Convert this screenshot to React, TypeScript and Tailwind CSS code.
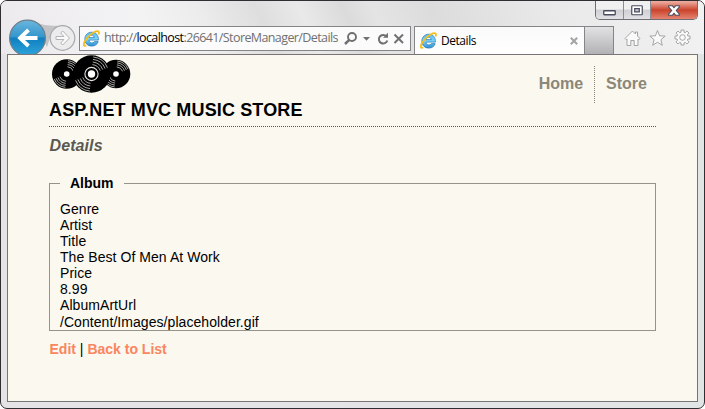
import React from "react";

function IELogo() {
  return (
    <svg width="17" height="17" viewBox="0 0 17 17" className="shrink-0">
      <defs>
        <linearGradient id="ieBlue" x1="0" y1="0" x2="0" y2="1">
          <stop offset="0" stopColor="#5fbdea" />
          <stop offset=".5" stopColor="#7fd3f5" />
          <stop offset="1" stopColor="#2b8ccd" />
        </linearGradient>
      </defs>
      <path
        fillRule="evenodd"
        d="M8.800 2.200C4.800 2.200 1.800 5.100 1.800 9.200c0 4 2.900 6.900 7 6.900 3.100 0 5.500-1.600 6.400-4.500h-3.900c-.5.9-1.300 1.400-2.400 1.400-1.700 0-2.800-1.100-2.900-2.900h9.400c.3-4.600-2.300-7.900-6.600-7.900zM6.100 7.600C6.300 6.100 7.300 5.200 8.700 5.200s2.400.9 2.600 2.400z"
        fill="url(#ieBlue)"
        stroke="#2079b8"
        strokeWidth=".7"
      />
      <path
        d="M3.300 15.500C-.3 17 .1 12.700 3.900 8.300 8 3.400 14 .1 15.600 1.600c.6.600.4 1.800-.1 2.900"
        fill="none"
        stroke="#f6be1c"
        strokeWidth="1.800"
      />
    </svg>
  );
}

function NavButtons() {
  return (
    <svg width="68" height="35" viewBox="0 0 68 35" className="shrink-0">
      <defs>
        <linearGradient id="back" x1="0" y1="0" x2="0" y2="1">
          <stop offset="0" stopColor="#6bb6dc" />
          <stop offset=".47" stopColor="#3396cd" />
          <stop offset=".5" stopColor="#0f7fc0" />
          <stop offset="1" stopColor="#2fa5dc" />
        </linearGradient>
      </defs>
      <path d="M26 2c8 5 17 4.500 26 5L42 19l-3 9z" fill="#c3c2c4" />
      <circle cx="19.500" cy="19" r="17.900" fill="url(#back)" stroke="#6d7f8a" strokeWidth="1.200" />
      <path d="M29.500 19H13M20.500 11 12 19l8.500 8" fill="none" stroke="#fff" strokeWidth="3.800" />
      <circle cx="54.500" cy="19" r="12.300" fill="#ececed" stroke="#a8a8aa" strokeWidth="1.200" />
      <path
        d="M48 17.500h8l-3.300-3.500 2-2 6.800 7-6.800 7-2-2 3.300-3.500h-8z"
        fill="#fafafa"
        stroke="#b4b4b6"
        strokeWidth="1"
      />
    </svg>
  );
}

function WindowControls() {
  return (
    <div className="flex h-[19px] w-[103px] shrink-0 overflow-hidden rounded-b-[5px] border border-t-0 border-[#6c6d75]">
      <div className="flex w-7 items-center justify-center border-r border-[#8c8d94] bg-linear-to-b from-[#f0f0f1] from-45% via-[#cfcfd4] via-50% to-[#e2e2e5]">
        <svg width="13" height="6" viewBox="0 0 13 6" className="mt-[5px]">
          <rect x=".75" y=".75" width="11.500" height="4" rx=".5" fill="#fff" stroke="#484b5d" strokeWidth="1.300" />
        </svg>
      </div>
      <div className="flex w-[27px] items-center justify-center border-r border-[#8c8d94] bg-linear-to-b from-[#f0f0f1] from-45% via-[#cfcfd4] via-50% to-[#e2e2e5]">
        <svg width="12" height="11" viewBox="0 0 12 11" className="mt-px">
          <rect x=".75" y=".75" width="10.500" height="9" rx=".5" fill="#fff" stroke="#484b5d" strokeWidth="1.200" />
          <rect x="3.700" y="3.600" width="4.600" height="3.300" fill="#c4c5cc" stroke="#484b5d" strokeWidth="1.200" />
        </svg>
      </div>
      <div className="flex flex-1 items-center justify-center bg-linear-to-b from-[#eba99c] from-5% via-[#c9422b] via-50% to-[#e48370]">
        <svg width="12" height="11" viewBox="0 0 12 11" className="mt-px">
          <path d="M.7.700h3.600L6 2.700 7.700.700h3.600v1.300L8.300 5.500l3 3.500v1.300H7.700L6 8.300l-1.700 2H.7V9l3-3.500L.7 2z" fill="#fff" stroke="#484b5d" strokeWidth="1.100" />
        </svg>
      </div>
    </div>
  );
}

function AddressBar() {
  return (
    <div className="mb-[3px] ml-[3px] flex h-[25px] w-[332px] shrink-0 items-center border border-[#858587] bg-[#fbfbfc] pl-[3px]">
      <IELogo />
      <span className="ml-1 w-[236px] shrink-0 whitespace-nowrap font-['Open_Sans',sans-serif] text-[12.5px] tracking-[-0.6px] text-[#707070]">
        http://<span className="text-black">localhost</span>:26641/StoreManager/Details
      </span>
      <svg width="65" height="16" viewBox="0 0 65 16" className="ml-1 shrink-0" fill="none" stroke="#707070">
        <circle cx="8" cy="6" r="4" strokeWidth="1.900" />
        <path d="M5.300 8.800 1 13" strokeWidth="2.500" />
        <path d="M19 6h7l-3.500 3.800z" fill="#707070" stroke="none" />
        <path d="M42.300 5.200A4.300 4.300 0 1 0 43.300 9.500" strokeWidth="2" />
        <path d="M44 1.800v5h-5z" fill="#707070" stroke="none" />
        <path d="m50.500 3.500 8.500 8.500m0-8.500L50.500 12" strokeWidth="2" />
      </svg>
    </div>
  );
}

function Tab() {
  return (
    <div className="ml-[3px] flex h-7 w-[171px] shrink-0 items-center border border-b-0 border-[#858587] bg-linear-to-b from-[#fafafa] to-white pl-[5px] pr-1.5">
      <IELogo />
      <span className="ml-[4px] flex-1 font-['Open_Sans',sans-serif] text-[12px] tracking-[-0.45px] text-black">
        Details
      </span>
      <svg width="8" height="8" viewBox="0 0 8 8">
        <path d="m.8.8 6.400 6.400m0-6.400L.8 7.200" stroke="#a3a3a3" strokeWidth="2" />
      </svg>
    </div>
  );
}

function Tools() {
  return (
    <div className="mb-[7px] ml-[10px] flex shrink-0 gap-2">
      <svg width="17" height="18" viewBox="0 0 17 18" fill="#fafafa" stroke="#a4a4a6">
        <path d="M1 9.500 8.500 2l3 3V3h2v4L16 9.500l-1.200 1.200-.8-.7v6.500h-3.800v-5H6.800v5H3V10l-.8.7z" />
      </svg>
      <svg width="17" height="18" viewBox="0 0 17 18" fill="#fafafa" stroke="#a4a4a6">
        <path d="m8.500 1.500 2.100 5.300 5.600.3-4.300 3.600 1.400 5.600-4.800-3.100-4.800 3.100 1.400-5.600L.8 7.100l5.600-.3z" />
      </svg>
      <svg width="17" height="18" viewBox="0 0 17 18" fill="#fafafa" stroke="#a4a4a6">
        <path d="M7 1h3v2.200l1.300.5L12.900 2 15 4.100l-1.600 1.700.5 1.200H16v3h-2.100l-.5 1.200 1.600 1.700-2.100 2.100-1.600-1.600-1.300.5V16H7v-2.100l-1.300-.5L4.100 15 2 12.900l1.600-1.700-.5-1.200H1V7h2.100l.5-1.200L2 4.100 4.100 2l1.600 1.700L7 3.200z" />
        <circle cx="8.500" cy="8.500" r="2.800" />
      </svg>
    </div>
  );
}

function BrowserChrome() {
  return (
    <header className="h-[53px] bg-[linear-gradient(65deg,#ece9ed_0%,#f3f3f4_22%,#ececed_30%,#dededf_38%,#e9e9ea_44%,#dbdbdc_50%,#e4e4e5_54%,#dcdcdd_62%,#e9e9e9_78%,#f2f2f2_100%)]">
      <div className="flex h-[19px] justify-end pr-1.5">
        <WindowControls />
      </div>
      <div className="flex h-[34px] items-end pl-[7px]">
        <NavButtons />
        <AddressBar />
        <Tab />
        <div className="h-7 w-[29px] shrink-0 border border-b-0 border-l-0 border-[#858587] bg-linear-to-b from-[#e2e2e3] to-[#b2b2b5]" />
        <Tools />
      </div>
    </header>
  );
}

function Vinyl({ x, y, r, hub = false }: { x: number; y: number; r: number; hub?: boolean }) {
  return (
    <g transform={`translate(${x} ${y})`}>
      <circle r={r} fill="#000" />
      {[0.5, 0.64, 0.78, 0.91].map((part) => {
        const q = part * r;
        return (
          <g key={part} fill="none" stroke="#d2d0ca" strokeWidth=".8">
            <path d={`M${q * 0.1} ${-q * 0.995}A${q} ${q} 0 0 1 ${q * 0.93} ${-q * 0.368}`} />
            <path d={`M${-q * 0.1} ${q * 0.995}A${q} ${q} 0 0 1 ${-q * 0.93} ${q * 0.368}`} />
          </g>
        );
      })}
      {hub && <circle r="6.600" fill="#000" stroke="#e5e3dd" strokeWidth="1.100" />}
      <circle r={hub ? 3.7 : 2.8} fill="#fff" />
    </g>
  );
}

function StoreLogo() {
  return (
    <svg width="82" height="40" viewBox="0 0 82 40" className="block">
      <Vinyl x={17.700} y={19} r={14.700} />
      <Vinyl x={67} y={19} r={14.300} />
      <Vinyl x={42.500} y={19} r={18.800} hub />
    </svg>
  );
}

const fields = [
  "Genre",
  "Artist",
  "Title",
  "The Best Of Men At Work",
  "Price",
  "8.99",
  "AlbumArtUrl",
  "/Content/Images/placeholder.gif",
];

function StorePage() {
  return (
    <main className="mx-1.5 h-[348px] border border-[#777577] bg-[#fbf8f0] pl-[41px] pr-[41px]">
      <div className="flex h-[72px] justify-between border-b border-dotted border-[#555]">
        <div>
          <StoreLogo />
          <h1 className="mt-[5px] whitespace-nowrap text-[18px] leading-5 font-bold tracking-[0.14px]">
            ASP.NET MVC MUSIC STORE
          </h1>
        </div>
        <nav className="mt-[11px] flex h-[37px] text-base font-bold text-[#8b8778]">
          <a className="border-r border-dotted border-[#8b8778] pr-[11px] leading-[35px]">Home</a>
          <a className="pl-[11px] pr-[9px] leading-[35px]">Store</a>
        </nav>
      </div>
      <h2 className="mt-[9px] h-[21px] pl-[0.5px] text-base leading-5 font-bold italic tracking-[0.1px] text-[#5c5a50]">
        Details
      </h2>
      <fieldset className="mt-[18px] h-[156px] border border-[#96938c] px-[10px]">
        <legend className="px-[10px] text-[14px] leading-4 font-bold">Album</legend>
        <div className="mt-[10px] text-[14px] tracking-[0.06px]">
          {fields.map((field) => (
            <div key={field} className="h-4 leading-4 last:mt-px">
              {field}
            </div>
          ))}
        </div>
      </fieldset>
      <p className="mt-[10px] pl-[0.5px] text-[14px] leading-4">
        <a className="font-bold text-[#fa8660]">Edit</a> | <a className="font-bold text-[#fa8660]">Back to List</a>
      </p>
    </main>
  );
}

export default function App() {
  return (
    <div className="h-[409px] w-[705px] overflow-hidden rounded-[7px] border border-[#2f2f33] bg-linear-to-r from-[#e6e3e7] to-[#e2e5e5] font-['Liberation_Sans',Arial,sans-serif] text-black">
      <BrowserChrome />
      <StorePage />
    </div>
  );
}
